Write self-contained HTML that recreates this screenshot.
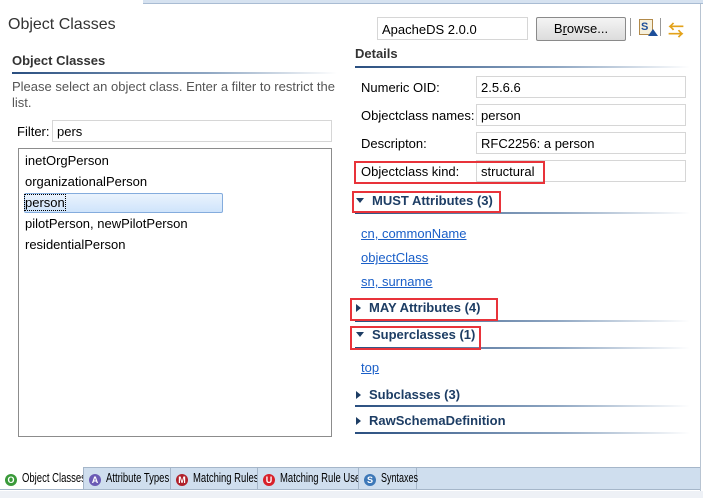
<!DOCTYPE html>
<html><head><meta charset="utf-8"><style>
*{margin:0;padding:0;box-sizing:border-box}
body{width:703px;height:498px;overflow:hidden;background:#fff;font-family:"Liberation Sans","Noto Sans CJK SC",sans-serif;font-size:13px;color:#000;position:relative}
.a{position:absolute;white-space:nowrap}
.inp{position:absolute;border:1px solid #d6d6d6;background:#fff;padding:2px 4px;height:22px;line-height:17px}
.hd{position:absolute;font-weight:bold;color:#333}
.ul{position:absolute;height:2px;background:linear-gradient(to right,#2a4f80,#8ea6c2 60%,#fff)}
.sec{position:absolute;font-weight:bold;color:#1d3d64;font-size:13px;white-space:nowrap}
.red{position:absolute;border:2px solid #e8333a}
.lnk{position:absolute;color:#1a5fc8;text-decoration:underline;white-space:nowrap}
.tri{display:inline-block;width:0;height:0;margin-right:8px}
.dn{border-left:4px solid transparent;border-right:4px solid transparent;border-top:5px solid #1d3d64;vertical-align:2px}
.rt{border-top:4px solid transparent;border-bottom:4px solid transparent;border-left:5px solid #1d3d64;vertical-align:0px}
.tab{position:absolute;top:468px;height:21px;border-right:1px solid #a5b6c9;line-height:20px;padding-left:5px;white-space:nowrap;overflow:hidden;font-size:12.5px}
.ic{display:inline-block;width:12px;height:12px;border-radius:6px;color:#fff;font-size:9px;font-weight:bold;text-align:center;line-height:12px;vertical-align:-1px;margin-right:5px}
.t{display:inline-block;transform:scaleX(0.76);transform-origin:left center}
</style></head><body>
<div class="a" style="left:143px;top:0;width:560px;height:4px;background:#d6e2f0;border-bottom:1px solid #a9bcd3"></div>
<div class="a" style="left:700px;top:4px;width:1px;height:488px;background:#b8c4d2"></div>
<div class="a" style="left:8px;top:16px;font-size:16px;color:#333;">Object Classes</div>

<div class="hd" style="left:12px;top:53px">Object Classes</div>
<div class="ul" style="left:12px;top:72px;width:325px"></div>
<div class="a" style="left:12px;top:79px;color:#555;line-height:16px">Please select an object class. Enter a filter to restrict the<br>list.</div>
<div class="a" style="left:17px;top:124px">Filter:</div>
<div class="inp" style="left:52px;top:120px;width:280px">pers</div>
<div class="a" style="left:18px;top:148px;width:314px;height:289px;border:1px solid #8c8c8c"></div>
<div class="a" style="left:24px;top:193px;width:199px;height:20px;background:linear-gradient(#eaf3fd,#cfe4fb);border:1px solid #84acdd;border-radius:2px"></div>
<div class="a" style="left:25px;top:150px;line-height:21px">inetOrgPerson<br>organizationalPerson<br><span style="outline:1px dotted #000">person</span><br>pilotPerson, newPilotPerson<br>residentialPerson</div>

<div class="inp" style="left:377px;top:17px;width:151px;height:23px;line-height:19px">ApacheDS 2.0.0</div>
<div class="a" style="left:536px;top:17px;width:90px;height:24px;border:1px solid #8a8a8a;border-radius:2px;background:linear-gradient(#f4f4f4,#dcdcdc);text-align:center;line-height:22px">B<u>r</u>owse...</div>
<div class="a" style="left:630px;top:18px;width:1px;height:18px;background:#999"></div>
<div class="a" style="left:639px;top:19px;width:14px;height:16px;border:1px solid #b28a4a;background:#f6f0dc;font-size:11px;font-weight:bold;color:#1d4f9a;line-height:14px;padding-left:1px">S</div>
<div class="a" style="left:648px;top:29px;width:0;height:0;border-left:5px solid transparent;border-right:5px solid transparent;border-bottom:7px solid #1d4f9a"></div>
<div class="a" style="left:660px;top:18px;width:1px;height:18px;background:#999"></div>
<div class="a" style="left:668px;top:17px;font-size:16px;color:#e3a21a;font-weight:bold">⇆</div>

<div class="hd" style="left:355px;top:46px">Details</div>
<div class="ul" style="left:355px;top:66px;width:335px"></div>
<div class="a" style="left:361px;top:80px">Numeric OID:</div>
<div class="inp" style="left:476px;top:76px;width:210px">2.5.6.6</div>
<div class="a" style="left:361px;top:108px">Objectclass names:</div>
<div class="inp" style="left:476px;top:104px;width:210px">person</div>
<div class="a" style="left:361px;top:136px">Descripton:</div>
<div class="inp" style="left:476px;top:132px;width:210px">RFC2256: a person</div>
<div class="a" style="left:361px;top:164px">Objectclass kind:</div>
<div class="inp" style="left:476px;top:160px;width:210px">structural</div>
<div class="red" style="left:354px;top:161px;width:191px;height:23px"></div>

<div class="sec" style="left:356px;top:193px"><span class="tri dn"></span>MUST Attributes (3)</div>
<div class="ul" style="left:355px;top:212px;width:335px"></div>
<div class="red" style="left:352px;top:191px;width:149px;height:22px"></div>
<div class="lnk" style="left:361px;top:226px">cn, commonName</div>
<div class="lnk" style="left:361px;top:250px">objectClass</div>
<div class="lnk" style="left:361px;top:274px">sn, surname</div>

<div class="sec" style="left:356px;top:300px"><span class="tri rt"></span>MAY Attributes (4)</div>
<div class="ul" style="left:355px;top:320px;width:335px"></div>
<div class="red" style="left:350px;top:298px;width:148px;height:23px"></div>

<div class="sec" style="left:356px;top:327px"><span class="tri dn"></span>Superclasses (1)</div>
<div class="ul" style="left:355px;top:347px;width:335px"></div>
<div class="red" style="left:350px;top:326px;width:131px;height:24px"></div>
<div class="lnk" style="left:361px;top:360px">top</div>

<div class="sec" style="left:356px;top:387px"><span class="tri rt"></span>Subclasses (3)</div>
<div class="ul" style="left:355px;top:405px;width:335px"></div>
<div class="sec" style="left:356px;top:413px"><span class="tri rt"></span>RawSchemaDefinition</div>
<div class="ul" style="left:355px;top:432px;width:335px"></div>

<div class="a" style="left:0;top:467px;width:700px;height:23px;background:#cfdeee;border-top:1px solid #a5b6c9;border-bottom:1px solid #a5b6c9"></div>
<div class="tab" style="left:0;width:84px;background:#fff;height:22px;top:467px;line-height:22px"><span class="ic" style="background:#3a9a3a">O</span><span class="t">Object Classes</span></div>
<div class="tab" style="left:84px;width:87px"><span class="ic" style="background:#6b5bb5">A</span><span class="t">Attribute Types</span></div>
<div class="tab" style="left:171px;width:87px"><span class="ic" style="background:#b0202a">M</span><span class="t">Matching Rules</span></div>
<div class="tab" style="left:258px;width:101px"><span class="ic" style="background:#d8202a">U</span><span class="t">Matching Rule Use</span></div>
<div class="tab" style="left:359px;width:58px;overflow:visible"><span class="ic" style="background:#3d78b8">S</span><span class="t" style="transform:scaleX(0.72)">Syntaxes</span></div>
<div class="a" style="left:0;top:491px;width:703px;height:7px;background:#eef1f6"></div>
</body></html>
